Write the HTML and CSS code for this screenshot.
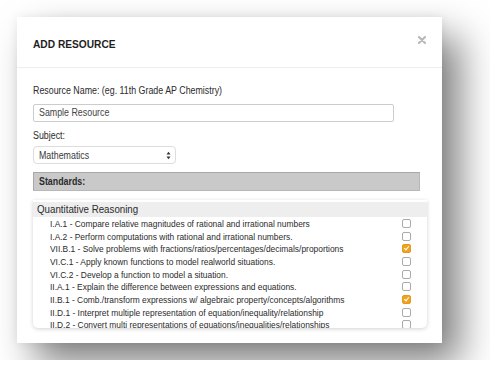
FILE: index.html
```html
<!DOCTYPE html>
<html lang="en">
<head>
    <meta charset="UTF-8">
    <title>Add Resource</title>
    <link rel="stylesheet" href="styles.css">
</head>
<body>
    <div class="modal">
        <!-- Header -->
        <div class="modal-header">
            <h2 class="t">ADD RESOURCE</h2>
            <svg class="close" width="8" height="8" viewBox="0 0 8 8">
                <path d="M1 1 L7 7 M7 1 L1 7" stroke="#b9b9b9" stroke-width="2.2" stroke-linecap="round"/>
            </svg>
        </div>

        <!-- Body -->
        <div class="modal-body">
            <label class="field-label t">Resource Name: (eg. 11th Grade AP Chemistry)</label>
            <div class="text-input"><span class="t">Sample Resource</span></div>

            <label class="field-label subject-label t">Subject:</label>
            <div class="select">
                <span class="t">Mathematics</span>
                <svg width="5" height="9" viewBox="0 0 5 9">
                    <path d="M0.5 3.5 L2.5 0.8 L4.5 3.5 Z M0.5 5.5 L2.5 8.2 L4.5 5.5 Z" fill="#333"/>
                </svg>
            </div>

            <div class="standards-bar"><span class="t">Standards:</span></div>

            <div class="standards-list">
                <div class="group-title"><span class="t">Quantitative Reasoning</span></div>
                <div class="std-row"><span class="t">I.A.1 - Compare relative magnitudes of rational and irrational numbers</span><span class="check"></span></div>
                <div class="std-row"><span class="t">I.A.2 - Perform computations with rational and irrational numbers.</span><span class="check"></span></div>
                <div class="std-row"><span class="t">VII.B.1 - Solve problems with fractions/ratios/percentages/decimals/proportions</span><span class="check checked"></span></div>
                <div class="std-row"><span class="t">VI.C.1 - Apply known functions to model realworld situations.</span><span class="check"></span></div>
                <div class="std-row"><span class="t">VI.C.2 - Develop a function to model a situation.</span><span class="check"></span></div>
                <div class="std-row"><span class="t">II.A.1 - Explain the difference between expressions and equations.</span><span class="check"></span></div>
                <div class="std-row"><span class="t">II.B.1 - Comb./transform expressions w/ algebraic property/concepts/algorithms</span><span class="check checked"></span></div>
                <div class="std-row"><span class="t">II.D.1 - Interpret multiple representation of equation/inequality/relationship</span><span class="check"></span></div>
                <div class="std-row"><span class="t">II.D.2 - Convert multi representations of equations/inequalities/relationships</span><span class="check"></span></div>
            </div>
        </div>
    </div>
</body>
</html>
```

FILE: styles.css
```css
body {
    margin: 0;
    padding: 17px;
    background-color: #fff;
    font-family: 'Liberation Sans', Arial, sans-serif;
    color: #2b2b2b;
}

/* the screenshot's text is a bit narrower than Arial */
.t {
    display: inline-block;
    transform: scaleX(0.885);
    transform-origin: 0 50%;
    white-space: nowrap;
}

.modal {
    width: 425px;
    height: 326px;
    background-color: #fff;
    box-shadow: 18px 20px 36px rgba(0, 0, 0, 0.5), 0 0 10px rgba(0, 0, 0, 0.07);
    overflow: hidden;
}

.modal-header {
    height: 50px;
    border-bottom: 1px solid #eee;
    display: flex;
    justify-content: space-between;
    padding: 0 16px;
}

.modal-header h2 {
    margin: 20px 0 0;
    font-size: 11.5px;
    line-height: 14px;
    font-weight: bold;
    color: #1e1e1e;
}

.close {
    margin: 19px 0 0;
}

.modal-body {
    padding: 16px 15px 0 16px;
    display: flex;
    flex-direction: column;
    align-items: flex-start;
}

.field-label {
    font-size: 10px;
    line-height: 14px;
    color: #2b2b2b;
}

.subject-label {
    margin-top: 7px;
}

.text-input {
    margin-top: 6px;
    width: 354px;
    height: 16px;
    border: 1px solid #ccc;
    border-radius: 2px;
    padding-left: 5px;
    font-size: 10px;
    line-height: 16px;
    color: #444;
}

.select {
    margin-top: 3px;
    width: 132px;
    height: 16px;
    border: 1px solid #ddd;
    border-radius: 4px;
    padding: 0 4px 0 5px;
    display: flex;
    justify-content: space-between;
    align-items: center;
    font-size: 10px;
    color: #3a3a3a;
}

.standards-bar {
    margin-top: 8px;
    width: 380px;
    height: 17px;
    background-color: #c9c9c9;
    border: 1px solid #a8a8a8;
    border-right-color: #b8b8b8;
    border-bottom-color: #b8b8b8;
    padding-left: 5px;
    font-size: 10px;
    line-height: 17px;
    font-weight: bold;
    color: #2b2b2b;
}

.standards-list {
    margin-top: 9px;
    width: 394px;
    height: 128px;
    overflow: hidden;
    border-radius: 0 0 5px 5px;
    box-shadow: 0 1px 4px rgba(0, 0, 0, 0.18);
    padding-top: 2px;
    box-sizing: border-box;
}

.group-title {
    height: 15px;
    background-color: #eee;
    padding-left: 4px;
    font-size: 11px;
    line-height: 15px;
    color: #2b2b2b;
}

.std-row {
    height: 12.7px;
    display: flex;
    justify-content: space-between;
    align-items: center;
    padding: 0 16px 0 17px;
    font-size: 9.5px;
    color: #2b2b2b;
}

.check {
    width: 7px;
    height: 7px;
    border: 1px solid #aaa;
    border-radius: 2px;
    flex-shrink: 0;
    position: relative;
}

.check.checked {
    background-color: #f0a21e;
    border-color: #e29a20;
}

.check.checked::after {
    content: '';
    position: absolute;
    left: 2px;
    top: 0;
    width: 2px;
    height: 4px;
    border: solid #fff;
    border-width: 0 1px 1px 0;
    transform: rotate(40deg);
}
```
